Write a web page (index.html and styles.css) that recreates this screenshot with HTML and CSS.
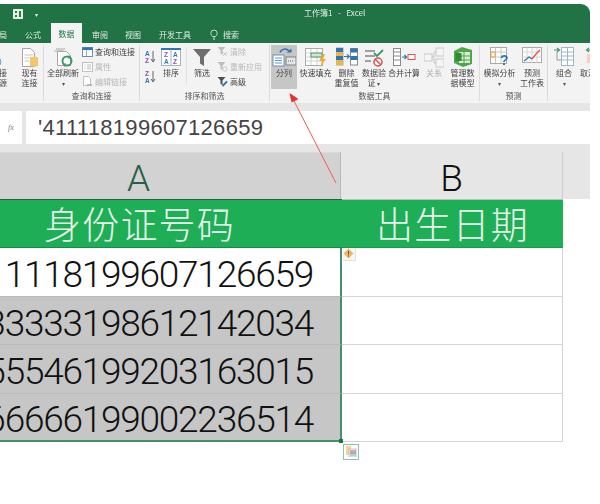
FILE: index.html
```html
<!DOCTYPE html>
<html lang="zh">
<head>
<meta charset="utf-8">
<title>工作簿1 - Excel</title>
<link rel="stylesheet" href="styles.css">
</head>
<body>
<div class="page">
  <div class="window">
    <div class="titlebar">
      <div class="qat">
        <svg class="qat-icon" width="12" height="12" viewBox="0 0 12 12"><rect x="1" y="1" width="10" height="10" fill="#e8efe9"/><path d="M3 3h2v2H3zM3 7h2v2H3zM7 3h2v6H7z" fill="#2f7a50"/></svg>
        <span class="qat-more">▾</span>
      </div>
      <div class="title">工作簿1 &nbsp;-&nbsp; Excel</div>
    </div>
    <div class="tabs">
      <span class="tab tab-a">局</span>
      <span class="tab tab-b">公式</span>
      <span class="tab tab-active">数据</span>
      <span class="tab tab-c">审阅</span>
      <span class="tab tab-d">视图</span>
      <span class="tab tab-e">开发工具</span>
      <svg class="bulb" width="8" height="11" viewBox="0 0 8 11"><path d="M2.5 7.5C1.5 6.5.8 5.6.8 4.2a3.2 3.2 0 0 1 6.4 0c0 1.4-.7 2.3-1.7 3.3zM2.8 9h2.4M3.2 10.4h1.6" fill="none" stroke="#e8f0ea" stroke-width=".8"/></svg>
      <span class="tab tab-f">搜索</span>
    </div>
    <div class="ribbon">
      <section class="group g-get">
        <div class="group-body">
          <div class="btn b-partial">
            <svg width="12" height="22" viewBox="0 0 12 22"><circle cx="2" cy="16" r="4" fill="#fff" stroke="#5b9bd5"/></svg>
            <span class="lbl">连接<br>数据源</span>
          </div>
          <div class="btn b-existing">
            <svg width="20" height="22" viewBox="0 0 20 22"><path d="M2.5 2.5h8l4 4v14h-12z" fill="#fff" stroke="#a6a6a6"/><path d="M4.5 9h8M4.5 12h5M4.5 15h5" stroke="#c4c4c4"/><path d="M10 11.500c0-1 8-1 8 0v8c0 1.500-8 1.500-8 0z" fill="#f3c56d"/></svg>
            <span class="lbl">现有<br>连接</span>
          </div>
        </div>
        <div class="group-name"></div>
      </section>
      <section class="group g-query">
        <div class="group-body">
          <div class="btn b-refresh">
            <svg width="24" height="22" viewBox="0 0 24 22"><path d="M5 3h9M3.500 5h9" stroke="#a8a8a8" fill="none"/><path d="M6.500 5.500h9l4 4v10h-13z" fill="#fff" stroke="#a6a6a6"/><circle cx="16" cy="15" r="4.500" fill="none" stroke="#3a9a6a" stroke-width="2"/><path d="M18 9l2.500 3-3.500.8zM14 21l-2.500-3 3.500-.8z" fill="#3a9a6a"/></svg>
            <span class="lbl">全部刷新<br><span class="chev">▾</span></span>
          </div>
          <div class="stack s-query">
            <div class="row"><svg width="11" height="10" viewBox="0 0 11 10"><rect x=".5" y=".5" width="10" height="9" fill="#fff" stroke="#6f8fb0"/><rect x=".5" y=".5" width="10" height="2.500" fill="#2e75b6"/><path d="M4.500 3v6" stroke="#9ab"/></svg><span>查询和连接</span></div>
            <div class="row muted"><svg width="11" height="10" viewBox="0 0 11 10"><rect x=".5" y=".5" width="10" height="9" fill="#fff" stroke="#c0c0c0"/><path d="M2.500 3h1M2.500 5h1M2.500 7h1M5 3h4M5 5h4M5 7h4" stroke="#bbb"/></svg><span>属性</span></div>
            <div class="row muted"><svg width="11" height="11" viewBox="0 0 11 11"><path d="M1.500.5h5l2 2v7h-7z" fill="#fff" stroke="#c0c0c0"/><path d="M5 9h5" stroke="#aab" stroke-width="1.500"/></svg><span>编辑链接</span></div>
          </div>
        </div>
        <div class="group-name">查询和连接</div>
      </section>
      <section class="group g-sort">
        <div class="group-body">
          <div class="sort-stack">
            <svg width="11" height="14" viewBox="0 0 11 14"><text x="0" y="6" class="az az-a">A</text><text x="0" y="13" class="az az-z">Z</text><path d="M8 1v10M6 9l2 3 2-3" fill="none" stroke="#555" stroke-width=".9"/></svg>
            <svg width="11" height="14" viewBox="0 0 11 14"><text x="0" y="6" class="az az-z">Z</text><text x="0" y="13" class="az az-a">A</text><path d="M8 1v10M6 9l2 3 2-3" fill="none" stroke="#555" stroke-width=".9"/></svg>
          </div>
          <div class="btn b-sort">
            <svg width="20" height="22" viewBox="0 0 20 22"><rect x=".5" y="3.500" width="19" height="16" fill="#fff" stroke="#9fb6cc"/><rect x="0" y="2" width="20" height="2" fill="#2e75b6"/><path d="M10 4v15" stroke="#9fb6cc"/><text x="3" y="11" class="az az-z">Z</text><text x="3" y="18" class="az az-a">A</text><text x="12" y="11" class="az az-a">A</text><text x="12" y="18" class="az az-z">Z</text></svg>
            <span class="lbl">排序</span>
          </div>
          <i class="inner-sep"></i>
          <div class="btn b-filter">
            <svg width="20" height="22" viewBox="0 0 20 22"><path d="M1 3h18l-7 8v9l-4-2.500V11z" fill="#6e6e6e"/></svg>
            <span class="lbl">筛选</span>
          </div>
          <div class="stack s-filter">
            <div class="row muted"><svg width="11" height="11" viewBox="0 0 11 11"><path d="M.5 1h8L5.500 4.500V9L3.500 8V4.500z" fill="#bdbdbd"/><path d="M6 6l4 4M10 6l-4 4" stroke="#c9c9c9"/></svg><span>清除</span></div>
            <div class="row muted"><svg width="11" height="11" viewBox="0 0 11 11"><path d="M.5 1h8L5.500 4.500V9L3.500 8V4.500z" fill="#bdbdbd"/><circle cx="8" cy="8" r="2.200" fill="none" stroke="#c9c9c9"/></svg><span>重新应用</span></div>
            <div class="row"><svg width="11" height="11" viewBox="0 0 11 11"><path d="M.5 1h8L5.500 4.500V9L3.500 8V4.500z" fill="#4f4f4f"/><path d="M5.500 10L10 5.500" stroke="#2e75b6" stroke-width="1.800"/></svg><span>高级</span></div>
          </div>
        </div>
        <div class="group-name">排序和筛选</div>
      </section>
      <section class="group g-tools">
        <div class="group-body">
          <div class="btn b-split active">
            <svg width="24" height="22" viewBox="0 0 24 22"><path d="M8 6.500C9.500 2.500 14.500 2 17 5" fill="none" stroke="#2e75b6" stroke-width="1.500"/><path d="M14.500 6.500h5V2.500z" fill="#2e75b6"/><rect x="1" y="9" width="11" height="11" fill="#fff" stroke="#6f8fb0"/><path d="M3 12h7M3 14.500h7M3 17h7" stroke="#5b9bd5"/><rect x="14" y="11" width="10" height="8" fill="#e6e6e6" stroke="#808080"/><path d="M16 15h6" stroke="#666" stroke-dasharray="1 1"/></svg>
            <span class="lbl">分列</span>
          </div>
          <div class="btn b-fill">
            <svg width="22" height="22" viewBox="0 0 22 22"><rect x=".5" y="2.500" width="17" height="17" fill="#fff" stroke="#aaa"/><path d="M.5 7h17M.5 11h17M.5 15h17M6 3v16M12 3v16" stroke="#d0d0d0"/><rect x="6" y="7" width="11" height="4" fill="#cfe7d5" stroke="#4f9a6a"/><path d="M18 8l-4 7h3l-2 6 6-8h-3l2-5z" fill="#f0a830"/></svg>
            <span class="lbl">快速填充</span>
          </div>
          <div class="btn b-dedupe">
            <svg width="22" height="22" viewBox="0 0 22 22"><rect x="0" y="2" width="7" height="17" fill="#fff" stroke="#aaa"/><path d="M0 2h7v4H0zM0 10h7v4H0z" fill="#2e75b6"/><path d="M0 6h7v4H0zM0 14h7v5H0z" fill="#e8b54b"/><rect x="14.500" y="2.500" width="7" height="16.500" fill="#fff" stroke="#8a8a8a"/><path d="M14.500 2.500h7v4h-7zM14.500 10h7v4h-7z" fill="#2e75b6"/><path d="M8 10.500h5M11 8.500l2.500 2-2.500 2" fill="none" stroke="#2e75b6" stroke-width="1.100"/></svg>
            <span class="lbl">删除<br>重复值</span>
          </div>
          <div class="btn b-valid">
            <svg width="20" height="22" viewBox="0 0 20 22"><path d="M1 5h10M1 10h10M1 15h6" stroke="#a0a0a0" stroke-width="2" fill="none"/><path d="M10 7l3 3 6-6" fill="none" stroke="#3a9a6a" stroke-width="1.800"/><circle cx="14" cy="16" r="4" fill="#fff" stroke="#d9534f" stroke-width="1.500"/><path d="M11 13l6 6" stroke="#d9534f" stroke-width="1.500"/></svg>
            <span class="lbl">数据验<br>证 <span class="chev">▾</span></span>
          </div>
          <div class="btn b-merge">
            <svg width="23" height="22" viewBox="0 0 23 22"><rect x=".5" y="2.500" width="7" height="17" fill="#fff" stroke="#8a8a8a"/><path d="M.5 6h7M.5 10h7M.5 14h7" stroke="#8a8a8a"/><path d="M9 11h4M11.500 9l2 2-2 2" fill="none" stroke="#2e75b6" stroke-width="1.200"/><rect x="15" y="8.500" width="7" height="5" fill="#fff" stroke="#d9534f"/></svg>
            <span class="lbl">合并计算</span>
          </div>
          <div class="btn b-rel muted">
            <svg width="20" height="22" viewBox="0 0 20 22"><rect x="0" y="8" width="8" height="7" fill="#f5f5f5" stroke="#c8c8c8"/><rect x="12" y="2" width="8" height="8" fill="#f5f5f5" stroke="#c8c8c8"/><rect x="12" y="13" width="8" height="8" fill="#f5f5f5" stroke="#c8c8c8"/><path d="M8 11h2V6h2M10 11v6h2" fill="none" stroke="#c8c8c8"/></svg>
            <span class="lbl">关系</span>
          </div>
          <div class="btn b-model">
            <svg width="20" height="22" viewBox="0 0 20 22"><path d="M1 5l8-4 10 3v14l-9 3-9-4z" fill="#4ea64a"/><path d="M6 6h11v11H6z" fill="#d8ecd4"/><path d="M6 10h11M6 14h11M11 6v11" stroke="#4ea64a"/><rect x="2.500" y="7" width="6" height="8" fill="#2f8a3a"/></svg>
            <span class="lbl">管理数<br>据模型</span>
          </div>
        </div>
        <div class="group-name">数据工具</div>
      </section>
      <section class="group g-forecast">
        <div class="group-body">
          <div class="btn b-whatif">
            <svg width="20" height="22" viewBox="0 0 20 22"><rect x=".5" y="1.500" width="16" height="16" fill="#fff" stroke="#aaa"/><path d="M.5 6h16M.5 11h16M5.500 2v15M11 2v15" stroke="#c8c8c8"/><rect x="1" y="6" width="4" height="5" fill="none" stroke="#e8a33c"/><text x="10" y="19" class="qmark">?</text></svg>
            <span class="lbl">模拟分析<br><span class="chev">▾</span></span>
          </div>
          <div class="btn b-sheet">
            <svg width="20" height="22" viewBox="0 0 20 22"><rect x=".5" y="1.500" width="19" height="15" fill="#fff" stroke="#aaa"/><path d="M.5 6h19M.5 11h19M5 2v15M10 2v15M15 2v15" stroke="#d4d4d4"/><path d="M2 15l5-4 3 2" fill="none" stroke="#2e75b6" stroke-width="1.300"/><path d="M10 13l4-5 4-4" fill="none" stroke="#e8553c" stroke-width="1.300"/></svg>
            <span class="lbl">预测<br>工作表</span>
          </div>
        </div>
        <div class="group-name">预测</div>
      </section>
      <section class="group g-outline">
        <div class="group-body">
          <div class="btn b-group">
            <svg width="21" height="22" viewBox="0 0 21 22"><path d="M0 4h5M3 2l2.500 2L3 6" fill="none" stroke="#3a9a6a" stroke-width="1.200"/><path d="M3 6v8h4" fill="none" stroke="#9a9a9a"/><rect x="7.500" y="1.500" width="12" height="18" fill="#fff" stroke="#9fb6cc"/><path d="M7.500 6h12M7.500 10h12M7.500 14h12M13.500 2v17" stroke="#9fb6cc"/></svg>
            <span class="lbl">组合<br><span class="chev">▾</span></span>
          </div>
          <div class="btn b-ungroup">
            <svg width="21" height="22" viewBox="0 0 21 22"><path d="M12 4H7M9 2L6.500 4 9 6" fill="none" stroke="#3a9a6a" stroke-width="1.200"/><rect x="7" y="8" width="10" height="9" fill="#f8d0c0"/></svg>
            <span class="lbl">取消组合</span>
          </div>
        </div>
        <div class="group-name"></div>
      </section>
    </div>
    <div class="formula-zone">
      <div class="fx-box"><span class="fx">fx</span></div>
      <div class="formula">'411118199607126659</div>
    </div>
    <div class="col-heads">
      <div class="col-head head-a">A</div>
      <div class="col-head head-b">B</div>
    </div>
    <div class="sheet">
      <div class="hcell hcell-a"><span>身份证号码</span></div>
      <div class="hcell hcell-b"><span>出生日期</span></div>
      <div class="cell cell-a"><span>411118199607126659</span></div>
      <div class="cell cell-b"></div>
      <div class="cell cell-a sel"><span>333333198612142034</span></div>
      <div class="cell cell-b"></div>
      <div class="cell cell-a sel"><span>555546199203163015</span></div>
      <div class="cell cell-b"></div>
      <div class="cell cell-a sel last"><span>666666199002236514</span></div>
      <div class="cell cell-b"></div>
    </div>
  </div>

  <svg class="arrow" width="60" height="100" viewBox="0 0 60 100"><path d="M48 90L6 8" stroke="#ee5a5a" stroke-width="1"/><path d="M1.500 0L10.500 6 3.500 9.500z" fill="#e8312f"/></svg>
  <div class="warn"><svg width="11" height="11" viewBox="0 0 11 11"><path d="M5.500.5l5 5-5 5-5-5z" fill="#edb765"/><path d="M5.500 3v3.500M5.500 7.500v1" stroke="#6a5030"/></svg></div>
  <i class="handle"></i>
  <div class="paste"><svg width="11" height="11" viewBox="0 0 11 11"><rect x="0" y="0" width="5" height="9" fill="#f4d49a"/><rect x="3" y="3" width="8" height="8" fill="#f2f2f2" stroke="#aaa" stroke-width=".6"/><path d="M4 5h6" stroke="#d9534f"/><path d="M4 7h6" stroke="#2e75b6"/><path d="M4 9h6" stroke="#7ab48c"/></svg></div>
</div>
</body>
</html>
```
FILE: styles.css
```css
* { box-sizing: border-box; }
html, body { margin: 0; padding: 0; background: #fff; }
body { font-family: "Noto Sans CJK SC", "Liberation Sans", sans-serif; overflow: hidden; }

.page { position: relative; width: 600px; height: 504px; padding-top: 4px; overflow: hidden; }
.window { width: 590px; overflow: hidden; border-top-right-radius: 9px; }

/* title + tabs */
.titlebar { height: 20px; background: #217346; display: flex; position: relative; color: #e6efe9; font-size: 8px; filter: blur(.3px); }
.qat { width: 304px; display: flex; align-items: center; padding-left: 12px; }
.qat-more { margin-left: 11px; font-size: 6px; }
.title { line-height: 17px; white-space: nowrap; word-spacing: 1px; }

.tabs { height: 19px; background: #217346; display: flex; align-items: flex-end; color: #e3ece6; font-size: 8px; filter: blur(.3px); }
.tab { height: 17px; line-height: 17px; white-space: nowrap; }
.tab-a { width: 7px; overflow: hidden; direction: rtl; }
.tab-b { margin-left: 18px; }
.tab-active { margin-left: 10px; width: 31px; height: 20px; line-height: 21px; text-align: center; background: #f3f3f3; color: #217346; }
.tab-c { margin-left: 10px; }
.tab-d { margin-left: 17px; }
.tab-e { margin-left: 18px; }
.bulb { margin: 0 5px 3px 19px; }

/* ribbon */
.ribbon { height: 60px; background: #f3f3f3; display: flex; padding-top: 2px; color: #444; font-size: 8px; filter: blur(.35px); overflow: hidden; }
.group { display: flex; flex-direction: column; height: 56px; border-right: 1px solid #dcdcdc; flex: none; overflow: hidden; }
.group-body { height: 45px; display: flex; }
.group-name { height: 11px; line-height: 11px; text-align: center; color: #555; white-space: nowrap; }
.g-get { width: 44px; justify-content: flex-end; }
.g-get .group-body { justify-content: flex-end; }
.g-query { width: 96px; }
.g-sort { width: 130px; }
.g-tools { width: 210px; }
.g-forecast { width: 68px; }
.g-outline { width: 43px; border-right: 0; }

.btn { display: flex; flex-direction: column; align-items: center; flex: none; overflow: hidden; padding-top: 1px; }
.btn svg { display: block; flex: none; }
.lbl { line-height: 10px; text-align: center; white-space: nowrap; }
.chev { font-size: 6px; color: #555; }
.muted, .muted .lbl { color: #b0b0b0; }
.active { background: #c6c6c6; }

.b-partial { width: 8px; align-items: flex-end; margin-right: 10px; }
.b-partial .lbl { width: 8px; direction: rtl; overflow: hidden; }
.b-existing { width: 25px; margin-right: 1px; }
.b-refresh { width: 36px; margin-left: 1px; }
.stack { display: flex; flex-direction: column; margin-top: -1px; }
.s-query { margin-left: 1px; }
.s-filter { margin-left: 4px; }
.row { height: 15px; display: flex; align-items: center; gap: 2px; white-space: nowrap; color: #444; }
.row.muted { color: #b8b8b8; }
.row svg { flex: none; }

.sort-stack { display: flex; flex-direction: column; gap: 6px; margin: 5px 0 0 5px; width: 16px; }
.sort-stack svg { display: block; }
.b-sort { width: 24px; margin-left: -2px; }
.inner-sep { width: 1px; height: 38px; margin: 2px 4px 0 3px; background: #e2e2e2; flex: none; }
.b-filter { width: 22px; }

.az { font: 700 6.500px "Liberation Sans", sans-serif; }
.az-a { fill: #2e75b6; }
.az-z { fill: #8e4fb3; }
.qmark { font: 700 14px "Liberation Sans", sans-serif; fill: #2e75b6; }

.b-split { width: 26px; margin-left: 1px; height: 44px; }
.b-fill { width: 37px; }
.b-dedupe { width: 25px; }
.b-valid { width: 30px; }
.b-merge { width: 30px; }
.b-rel { width: 30px; }
.b-model { width: 27px; }
.b-whatif { width: 35px; margin-left: 2px; }
.b-sheet { width: 30px; }
.b-group { width: 26px; margin-left: 3px; }
.b-ungroup { width: 40px; align-items: flex-start; padding-left: 3px; }

/* formula */
.formula-zone { height: 49px; background: #e6e6e6; padding: 8px 0 8px; display: flex; gap: 4px; }
.fx-box { width: 22px; background: #fff; display: flex; align-items: center; justify-content: center; }
.fx { font: italic 8px "Liberation Serif", serif; color: #777; }
.formula { flex: 1; background: #fff; padding-left: 12px; font: 22px/33px "Liberation Sans", sans-serif; letter-spacing: .3px; color: #444; white-space: nowrap; }

/* sheet */
.col-heads { display: flex; height: 47px; background: #e6e6e6; font: 300 37px/53px Roboto, "Liberation Sans", sans-serif; text-align: center; }
.col-head { overflow: hidden; }
.head-a { width: 341px; padding-right: 63px; background: #d2d2d2; color: #2a6048; border-right: 1px solid #b9b9b9; box-shadow: inset 0 1px 0 #dcdcdc; }
.head-b { width: 222px; color: #111; border-right: 1px solid #cfcfcf; }

.sheet { display: grid; width: 563px; grid-template-columns: 342px 221px; grid-template-rows: 49px 49px 48px 49px 48px; }
.hcell { background: #1eae55; color: #e9f2ec; font-size: 37px; font-weight: 300; display: flex; align-items: center; justify-content: center; white-space: nowrap; overflow: hidden; letter-spacing: 1.200px; }
.hcell span { line-height: 47px; }
.hcell-a { padding-right: 63px; border-top: 1px solid #2a6048; border-bottom: 1px solid #1a8a47; }
.hcell-b { border-top: 1px solid #bdbdbd; border-bottom: 1px solid #1a9a4f; }
.cell { border-bottom: 1px solid #d4d4d4; }
.cell-a { display: flex; justify-content: flex-end; align-items: center; overflow: hidden; padding: 6px 27px 0 0; border-right: 2px solid #41916a; border-bottom-color: #bbb; font: 300 37px/42px Roboto, "Liberation Sans", sans-serif; letter-spacing: -1.250px; color: #111; white-space: nowrap; }
.cell-b { border-right: 1px solid #d4d4d4; }
.sel { background: #c6c6c6; }
.last { border-bottom: 2px solid #41916a; }

/* overlays */
.arrow { position: absolute; left: 288px; top: 93px; }
.warn { position: absolute; left: 343px; top: 248px; width: 13px; height: 13px; background: #f6f6f6; border: 1px solid #e0e0e0; border-width: 0 1px 1px 0; }
.warn svg { display: block; }
.handle { position: absolute; left: 339px; top: 439px; width: 4px; height: 4px; background: #217346; }
.paste { position: absolute; left: 343px; top: 444px; width: 16px; height: 16px; background: #fff; border: 1px solid #8fc2a6; padding: 1px 0 0 2px; }
.paste svg { display: block; }
```
